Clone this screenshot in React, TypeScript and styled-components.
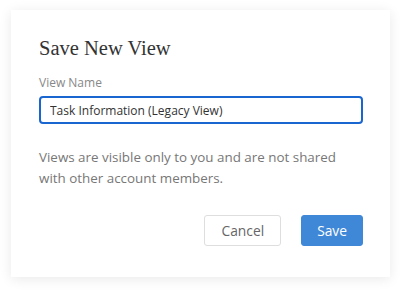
import React from 'react'
import styled, { createGlobalStyle } from 'styled-components'

const Global = createGlobalStyle`
    body {
        margin: 0;
        background: #fff;
        font-family: 'Open Sans', 'Noto Sans', sans-serif;
    }
`

export default function App() {
    return (
        <>
            <Global />
            <Page>
                <Card>
                    <Title>Save New View</Title>
                    <Label htmlFor="view-name">View Name</Label>
                    <Input id="view-name" defaultValue="Task Information (Legacy View)" />
                    <Note>
                        Views are visible only to you and are not shared with other account members.
                    </Note>
                    <Actions>
                        <Button>Cancel</Button>
                        <Button primary>Save</Button>
                    </Actions>
                </Card>
            </Page>
        </>
    )
}

const Page = styled.div`
    width: 400px;
    height: 292px;
    padding: 10px 10px 0 11px;
    box-sizing: border-box;
`

const Card = styled.div`
    width: 379px;
    height: 267px;
    box-sizing: border-box;
    background: #fff;
    box-shadow: 0 2px 12px rgba(0, 0, 0, 0.09);
    padding: 26px 27px 0 28px;
    display: flex;
    flex-direction: column;
`

const Title = styled.h2`
    margin: 0 0 15px;
    font-family: 'Liberation Serif', 'DejaVu Serif', serif;
    font-weight: 400;
    font-size: 20.5px;
    line-height: 24px;
    color: #333;
`

const Label = styled.label`
    font-size: 12px;
    line-height: 16px;
    color: #888;
    margin-bottom: 5px;
`

const Input = styled.input`
    height: 28px;
    box-sizing: border-box;
    border: 2px solid #1a66d0;
    border-radius: 4px;
    padding: 0 9px;
    font-family: 'Open Sans', sans-serif;
    font-size: 12px;
    color: #333;
    outline: none;
`

const Note = styled.p`
    margin: 23px 0 0;
    font-size: 13.4px;
    line-height: 21px;
    color: #777;
`

const Actions = styled.div`
    display: flex;
    justify-content: flex-end;
    gap: 20px;
    margin-top: 26px;
`

const Button = styled.button<{ primary?: boolean }>`
    height: 31px;
    padding: 0 ${(p) => (p.primary ? '15px' : '16px')};
    border-radius: 3px;
    font-family: 'Open Sans', sans-serif;
    font-size: 13.8px;
    border: 1px solid ${(p) => (p.primary ? '#3f88d8' : '#dedede')};
    background: ${(p) => (p.primary ? '#3f88d8' : '#fff')};
    color: ${(p) => (p.primary ? '#fff' : '#666')};
    cursor: pointer;
`
